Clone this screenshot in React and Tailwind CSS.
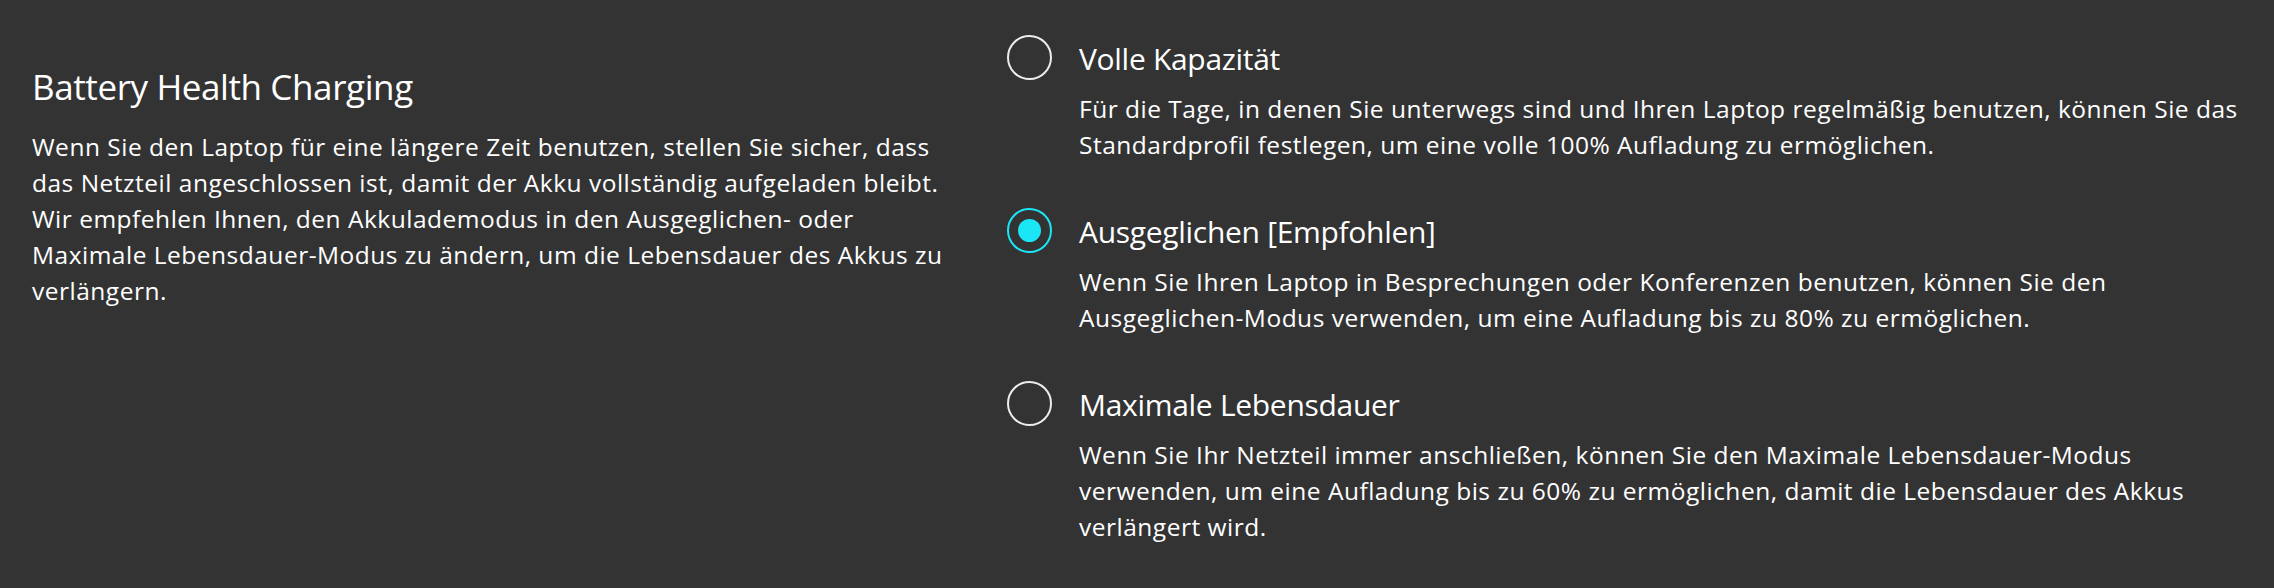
const options = [
  {
    title: 'Volle Kapazität',
    lines: [
      'Für die Tage, in denen Sie unterwegs sind und Ihren Laptop regelmäßig benutzen, können Sie das',
      'Standardprofil festlegen, um eine volle 100% Aufladung zu ermöglichen.',
    ],
    selected: false,
  },
  {
    title: 'Ausgeglichen [Empfohlen]',
    lines: [
      'Wenn Sie Ihren Laptop in Besprechungen oder Konferenzen benutzen, können Sie den',
      'Ausgeglichen-Modus verwenden, um eine Aufladung bis zu 80% zu ermöglichen.',
    ],
    selected: true,
  },
  {
    title: 'Maximale Lebensdauer',
    lines: [
      'Wenn Sie Ihr Netzteil immer anschließen, können Sie den Maximale Lebensdauer-Modus',
      'verwenden, um eine Aufladung bis zu 60% zu ermöglichen, damit die Lebensdauer des Akkus',
      'verlängert wird.',
    ],
    selected: false,
  },
]

const intro = [
  'Wenn Sie den Laptop für eine längere Zeit benutzen, stellen Sie sicher, dass',
  'das Netzteil angeschlossen ist, damit der Akku vollständig aufgeladen bleibt.',
  'Wir empfehlen Ihnen, den Akkulademodus in den Ausgeglichen- oder',
  'Maximale Lebensdauer-Modus zu ändern, um die Lebensdauer des Akkus zu',
  'verlängern.',
]

function Radio({ selected }) {
  if (selected) {
    return (
      <div className="w-[45px] h-[45px] shrink-0 rounded-full border-2 border-[#1ae6f6] flex items-center justify-center">
        <div className="w-[23px] h-[23px] rounded-full bg-[#1ae6f6]" />
      </div>
    )
  }
  return <div className="w-[45px] h-[45px] shrink-0 rounded-full border-2 border-[#ececec]" />
}

function ChargeOption({ option }) {
  return (
    <div className="flex items-start gap-[27px]">
      <Radio selected={option.selected} />
      <div className="w-[1180px]">
        <div className="mt-1 text-[30px] leading-[40px] tracking-[-0.3px]">{option.title}</div>
        <p className="mt-3 text-[24.5px] leading-[36px] tracking-[0.5px]">
          {option.lines.map((line) => (
            <span key={line} className="block whitespace-nowrap">{line}</span>
          ))}
        </p>
      </div>
    </div>
  )
}

export default function App() {
  return (
    <div className="min-h-screen w-full bg-[#333333] text-white font-['Open_Sans',sans-serif] flex">
      <div className="w-[975px] shrink-0 pl-8 pt-[63px]">
        <h2 className="text-[35px] leading-[48px] tracking-[-0.4px]">Battery Health Charging</h2>
        <p className="mt-[18px] text-[24.5px] leading-[36px] tracking-[0.5px]">
          {intro.map((line) => (
            <span key={line} className="block whitespace-nowrap">{line}</span>
          ))}
        </p>
      </div>
      <div className="flex-1 pl-[32px] pt-[35px] flex flex-col gap-[45px]">
        {options.map((option) => (
          <ChargeOption key={option.title} option={option} />
        ))}
      </div>
    </div>
  )
}
